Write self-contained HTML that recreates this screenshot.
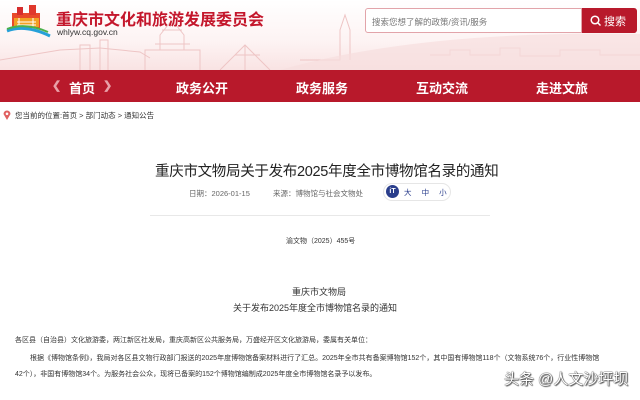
<!DOCTYPE html>
<html><head><meta charset="utf-8"><style>
*{margin:0;padding:0;box-sizing:border-box}
body{width:640px;height:400px;overflow:hidden;background:#fff;font-family:"Liberation Sans","Noto Sans CJK SC",sans-serif;position:relative}
.hdr{position:absolute;left:0;top:0;width:640px;height:70px;background:linear-gradient(180deg,#fff 0%,#fdf3f3 60%,#f9e3e3 100%)}
.abs{position:absolute;white-space:nowrap}
.nav{position:absolute;left:0;top:70px;width:640px;height:32px;background:#b8192b;color:#fff;font-weight:bold;font-size:13px}
.nav span{position:absolute;top:8px}
</style></head><body>
<div class="hdr">
<svg width="640" height="70" style="position:absolute;left:0;top:0">
<g fill="none" stroke="#eec5c5" stroke-width="1">
<path d="M0 60 L30 55 L60 50 L100 48 L140 52 L150 58"/>
<path d="M145 70 V50 H160 V35 L172 20 L184 35 V50 H200 V70"/>
<path d="M150 50 H195 M155 44 H190 M162 30 H182"/>
<path d="M220 70 L245 45 L270 70 M245 45 V70 M235 55 L260 55"/>
<path d="M300 60 H340 V30 L345 15 L350 30 V60"/>
<path d="M430 55 H450 V50 H470 V55 H500 V48 H520 V56 H560 V50 H600 V55 H640"/>
<path d="M80 70 V45 H90 V70 M100 70 V40 H108 V70"/>
</g>
<path d="M280 70 Q420 30 640 34 V70 Z" fill="#f6dede" opacity="0.7"/>
<rect x="12" y="13" width="28" height="15" fill="#e84a2a"/>
<rect x="17" y="7" width="6" height="8" fill="#d62d2d"/>
<rect x="29" y="5" width="7" height="10" fill="#e0382c"/>
<rect x="14" y="18" width="25" height="9" fill="#f2a024"/>
<path d="M17 22 H36 M17 25 H36 M19 18 V27 M33 18 V27" stroke="#fff" stroke-width="1"/>
<path d="M7 31 Q25 24 50 36" stroke="#26a0d8" stroke-width="3" fill="none"/>
<path d="M7 29 Q25 22 48 32" stroke="#4cb04a" stroke-width="2" fill="none"/>
</svg>
<div class="abs" style="left:56px;top:6px;font-size:16px;font-weight:bold;color:#c4172c">重庆市文化和旅游发展委员会</div>
<div class="abs" style="left:57px;top:27px;font-size:8.5px;color:#333">whlyw.cq.gov.cn</div>
<div class="abs" style="left:365px;top:8px;width:217px;height:25px;border:1px solid #e2a4aa;border-radius:3px 0 0 3px;background:#fff;font-size:8.5px;color:#777;padding:7px 6px">搜索您想了解的政策/资讯/服务</div>
<div class="abs" style="left:582px;top:8px;width:55px;height:25px;background:#b8192b;border-radius:0 3px 3px 0;color:#fff;font-size:11px;padding:5px 0 0 8px">
<svg width="11" height="11" style="vertical-align:-1px"><circle cx="5" cy="5" r="3.8" stroke="#fff" stroke-width="1.5" fill="none"/><path d="M8 8 L10.5 10.5" stroke="#fff" stroke-width="1.5"/></svg> 搜索</div>
</div>
<div class="nav">
<span style="left:52px;color:#e9a0a8;font-size:11px;top:9px">❮</span>
<span style="left:69px">首页</span>
<span style="left:103px;color:#e9a0a8;font-size:11px;top:9px">❯</span>
<span style="left:176px">政务公开</span>
<span style="left:296px">政务服务</span>
<span style="left:416px">互动交流</span>
<span style="left:536px">走进文旅</span>
</div>
<svg class="abs" style="left:3px;top:110px" width="8" height="10"><path d="M4 10 L0.5 4 A3.5 3.5 0 1 1 7.5 4 Z" fill="#e06060"/><circle cx="4" cy="3.8" r="1.3" fill="#fff"/></svg>
<div class="abs" style="left:15px;top:110px;font-size:7.5px;color:#333">您当前的位置:首页 &gt; 部门动态 &gt; 通知公告</div>
<div class="abs" style="left:155px;top:160px;font-size:14.5px;color:#222;letter-spacing:-0.3px">重庆市文物局关于发布2025年度全市博物馆名录的通知</div>
<div class="abs" style="left:189px;top:188px;font-size:7.5px;color:#666">日期：2026-01-15</div>
<div class="abs" style="left:273px;top:188px;font-size:7.5px;color:#666">来源：博物馆与社会文物处</div>
<div class="abs" style="left:383px;top:183px;width:68px;height:18px;border:1px solid #e6e6e6;border-radius:9px"></div>
<div class="abs" style="left:386px;top:185px;width:13px;height:13px;border-radius:50%;background:#2a3e8c;color:#fff;font-size:7px;text-align:center;line-height:13px;font-weight:bold">iT</div>
<div class="abs" style="left:404px;top:187px;font-size:7.5px;color:#2a3e8c;word-spacing:8px">大 中 小</div>
<div style="position:absolute;left:150px;top:215px;width:340px;height:1px;background:#e8e8e8"></div>
<div class="abs" style="left:286px;top:236px;font-size:7px;color:#333">渝文物（2025）455号</div>
<div class="abs" style="left:292px;top:285px;font-size:9px;color:#333">重庆市文物局</div>
<div class="abs" style="left:233px;top:301px;font-size:9px;color:#333">关于发布2025年度全市博物馆名录的通知</div>
<div class="abs" style="left:15px;top:335px;font-size:7px;color:#333">各区县（自治县）文化旅游委，两江新区社发局，重庆高新区公共服务局，万盛经开区文化旅游局，委属有关单位：</div>
<div class="abs" style="left:30px;top:353px;font-size:7px;color:#333">根据《博物馆条例》，我局对各区县文物行政部门报送的2025年度博物馆备案材料进行了汇总。2025年全市共有备案博物馆152个，其中国有博物馆118个（文物系统76个，行业性博物馆</div>
<div class="abs" style="left:15px;top:369px;font-size:7px;color:#333">42个），非国有博物馆34个。为服务社会公众，现将已备案的152个博物馆编制成2025年度全市博物馆名录予以发布。</div>
<div class="abs" style="left:504px;top:368px;font-size:15px;color:#fff;text-shadow:0 0 1px #333,0 0 1px #333,1px 1px 1px #555">头条 @人文沙坪坝</div>
</body></html>
